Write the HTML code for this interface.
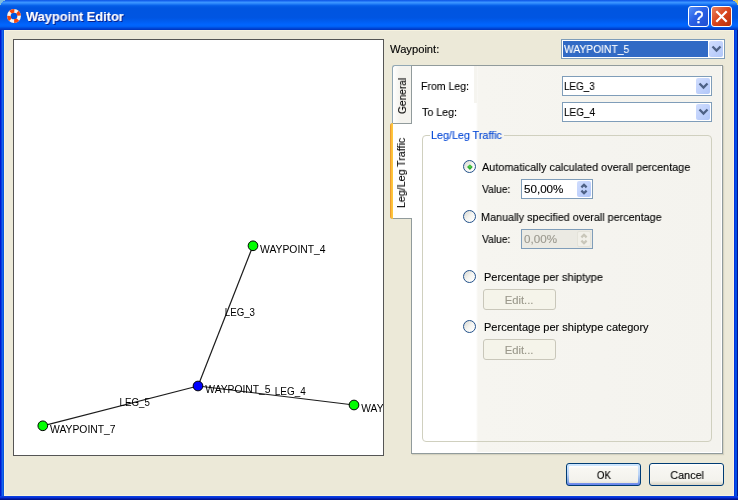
<!DOCTYPE html>
<html><head><meta charset="utf-8"><title>Waypoint Editor</title>
<style>
*{box-sizing:border-box;margin:0;padding:0}
html,body{width:738px;height:500px;overflow:hidden;background:#ECE9D8}
body{position:relative;font-family:"Liberation Sans",sans-serif;font-size:11px;color:#000;line-height:13px}
.a{position:absolute}
.t{position:absolute;white-space:pre;line-height:13px;height:13px;transform-origin:0 0;will-change:transform;-webkit-text-stroke:0.12px currentColor}
#title{left:0;top:0;width:738px;height:30px;background:linear-gradient(to bottom,#0A50DF 0px,#1F6FF5 1px,#3A94FF 2.5px,#2580F8 4px,#0D68EE 5px,#035CE6 6px,#0055E0 8px,#0055E2 18px,#0061F8 23px,#0066FF 25px,#0060F5 26.5px,#0052E5 27.5px,#0044D4 28.5px,#0033BB 30px)}
#bl{left:0;top:30px;width:4px;height:470px;background:linear-gradient(to right,#0019CF 0,#0019CF 1px,#0A40E0 1px,#0A40E0 2px,#1464EE 2px,#1464EE 3px,#0855DD 3px)}
#br{left:734px;top:30px;width:4px;height:470px;background:linear-gradient(to left,#00138C 0,#00138C 1px,#0048E0 1px,#0050E8 2px,#0050E8 3px,#0831D9 3px)}
#bb{left:0;top:496px;width:738px;height:4px;background:linear-gradient(to top,#00138C 0,#00138C 1px,#001EB0 1px,#001EB0 2px,#0831D9 2px,#0831D9 3px,#0A3FE0 3px)}
#canvas{left:13px;top:39px;width:371px;height:417px;background:#fff;border:1px solid #555;overflow:hidden}
.combo{position:absolute;border:1px solid #7F9DB9;background:#fff;height:20px}
.cbtn{position:absolute;right:1px;top:1px;width:14px;height:16px;border-radius:2px;background:linear-gradient(135deg,#D0DDFD,#C1D2FC 50%,#B0C6F8)}
.cbtn svg{position:absolute;left:0;top:0}
.radio{position:absolute;width:13px;height:13px;border-radius:50%;border:1px solid #21508A;background:linear-gradient(135deg,#DCDCD7 10%,#F4F4F0 50%,#fff 90%)}
.spin{position:absolute;width:72px;height:20px;border:1px solid #7F9DB9;background:#fff}
.dbtn{position:absolute;width:73px;height:21px;border:1px solid #C9C7BA;border-radius:3px;background:#F5F4EA}
.btn{position:absolute;height:23px;width:75px;border:1px solid #003C74;border-radius:3px;background:linear-gradient(to bottom,#fff 0,#F8F7F3 15%,#F3F2EC 80%,#E2DFD3 92%,#D8D3C6 100%)}
</style></head><body>
<div class="a" id="title"></div>
<div class="a" style="left:4px;top:30px;width:730px;height:466px;box-shadow:inset 0 0 0 1px #F6F2DF"></div>
<div class="a" id="bl"></div><div class="a" id="br"></div><div class="a" id="bb"></div>
<svg class="a" style="left:0;top:0" width="5" height="5" shape-rendering="crispEdges"><path d="M0 0h5v1h-2v1h-1v1h-1v2h-1z" fill="#7FBBDD"/></svg>
<svg class="a" style="left:733px;top:0" width="5" height="5" shape-rendering="crispEdges"><path d="M5 0h-5v1h2v1h1v1h1v2h1z" fill="#E0C860"/></svg>
<svg class="a" style="left:6px;top:8px" width="16" height="16" viewBox="0 0 16 16">
<circle cx="8" cy="8" r="5.15" fill="none" stroke="#F6F4F0" stroke-width="3.6"/>
<circle cx="8" cy="8" r="5.15" fill="none" stroke="#F5480F" stroke-width="3.6" stroke-dasharray="4.045 4.045" transform="rotate(-50 8 8)"/>
</svg>
<span class="t" style="left:26px;top:9px;font-size:13px;font-weight:bold;color:#fff;text-shadow:1px 1px 0 #0A1F8A;line-height:15px;height:15px;transform:scaleX(0.9860)">Waypoint Editor</span>
<div class="a" style="left:688px;top:6px;width:21px;height:21px;border:1px solid #fff;border-radius:3px;background:linear-gradient(135deg,#5590F8,#2A60E6 45%,#1E4ED0)"></div>
<span class="t" style="left:694px;top:8px;font-size:17px;color:#fff;line-height:19px;height:19px;-webkit-text-stroke:0.4px #fff">?</span>
<div class="a" style="left:711px;top:6px;width:21px;height:21px;border:1px solid #fff;border-radius:3px;background:linear-gradient(135deg,#E8835F,#D9431A 50%,#B8300C)"></div>
<svg class="a" style="left:711px;top:6px" width="21" height="21"><path d="M5.3 5.3L15.7 15.7M15.7 5.3L5.3 15.7" stroke="#fff" stroke-width="2.2"/></svg>

<div class="a" id="canvas">
<svg class="a" style="left:-1px;top:-1px;will-change:transform" width="371" height="417" viewBox="13 39 371 417">
<g stroke="#1c1c1c" stroke-width="1.2" fill="none">
<line x1="198" y1="386" x2="253" y2="245.8"/>
<line x1="198" y1="386" x2="354" y2="405"/>
<line x1="198" y1="386" x2="42.8" y2="425.8"/>
</g>
<g stroke="#000" stroke-width="1">
<circle cx="253" cy="245.8" r="4.85" fill="#00FF00"/>
<circle cx="354" cy="405" r="4.85" fill="#00FF00"/>
<circle cx="42.8" cy="425.8" r="4.85" fill="#00FF00"/>
<circle cx="198" cy="386" r="4.85" fill="#0000FF"/>
</g>
<g font-family="Liberation Sans, sans-serif" font-size="11" fill="#000">
<text x="260" y="253" textLength="65.6" lengthAdjust="spacingAndGlyphs">WAYPOINT_4</text>
<text x="224.8" y="316" textLength="30.2" lengthAdjust="spacingAndGlyphs">LEG_3</text>
<text x="205.3" y="393" textLength="65.2" lengthAdjust="spacingAndGlyphs">WAYPOINT_5</text>
<text x="274.8" y="395" textLength="31" lengthAdjust="spacingAndGlyphs">LEG_4</text>
<text x="119.6" y="406" textLength="30.2" lengthAdjust="spacingAndGlyphs">LEG_5</text>
<text x="361.3" y="412" textLength="65" lengthAdjust="spacingAndGlyphs">WAYPOINT_6</text>
<text x="50" y="433" textLength="65.6" lengthAdjust="spacingAndGlyphs">WAYPOINT_7</text>
</g>
</svg>
</div>

<div class="combo" style="left:561px;top:39px;width:164px">
  <div class="a" style="left:1px;top:1px;width:145px;height:16px;background:#316AC5"></div>
  <div class="cbtn"><svg width="14" height="16"><path d="M3.5 5.5L7.5 9.5L11.5 5.5" fill="none" stroke="#4D6185" stroke-width="2.3"/></svg></div>
</div>
<span class="t" style="left:564px;top:43px;transform:scaleX(0.9356);color:#fff">WAYPOINT_5</span>

<!-- tab pane -->
<div class="a" style="left:411px;top:65px;width:312px;height:389px;border:1px solid #919B9C;background:linear-gradient(to right,#fff 0,#fff 64px,#F6F5F0 66px,#F4F3EE 100%);box-shadow:inset -1px -1px 0 #fff,1px 1px 1px rgba(120,120,100,0.2)"></div>
<div class="a" style="left:474px;top:66px;width:3px;height:37px;background:#F5F4EF"></div>
<div class="a" style="left:392px;top:65px;width:20px;height:58px;border:1px solid #91A7B4;border-bottom:none;border-right-color:#919B9C;border-radius:3px 0 0 0;background:linear-gradient(to right,#fff,#F4F3EE 40%,#F4F3EE)"></div>
<div class="a" style="left:390px;top:123px;width:22px;height:96px;border:1px solid #919B9C;border-right:none;border-left:none;border-radius:3px 0 0 3px;background:#fff"></div>
<div class="a" style="left:390px;top:123px;width:3px;height:96px;border-radius:3px 0 0 3px;background:linear-gradient(to right,#E68B2C,#FFC73C 60%,#FFC73C)"></div>
<span class="t" style="left:396px;top:114px;transform:rotate(-90deg) scaleX(0.9249)">General</span>
<span class="t" style="left:395px;top:208.2px;transform:rotate(-90deg) scaleX(0.9672)">Leg/Leg Traffic</span>

<div class="combo" style="left:562px;top:76px;width:150px"><div class="cbtn"><svg width="14" height="16"><path d="M3.5 5.5L7.5 9.5L11.5 5.5" fill="none" stroke="#4D6185" stroke-width="2.3"/></svg></div></div>
<div class="combo" style="left:562px;top:102px;width:150px"><div class="cbtn"><svg width="14" height="16"><path d="M3.5 5.5L7.5 9.5L11.5 5.5" fill="none" stroke="#4D6185" stroke-width="2.3"/></svg></div></div>
<span class="t" style="left:564.3px;top:80px;transform:scaleX(0.8934);">LEG_3</span>
<span class="t" style="left:564.3px;top:106px;transform:scaleX(0.9051);">LEG_4</span>

<div class="a" style="left:422px;top:135px;width:290px;height:307px;border:1px solid #D0D0BF;border-radius:4px"></div>
<div class="a" style="left:430px;top:134px;width:74px;height:3px;background:linear-gradient(to right,#fff 0,#fff 46px,#F5F4EF 47px,#F5F4EF 100%)"></div>
<span class="t" style="left:431px;top:129px;transform:scaleX(0.9769);color:#0046D5">Leg/Leg Traffic</span>

<div class="radio" style="left:463px;top:160px"><div class="a" style="left:3.6px;top:3.6px;width:3.8px;height:3.8px;transform:rotate(45deg);border-radius:0.6px;background:radial-gradient(circle at 40% 40%,#55D555,#21A121 75%)"></div></div>
<div class="radio" style="left:463px;top:210px"></div>
<div class="radio" style="left:463px;top:270px"></div>
<div class="radio" style="left:463px;top:320px"></div>
<div class="spin" style="left:521px;top:179px">
 <div class="a" style="left:55px;top:1px;width:14px;height:16px;border-radius:2px;background:linear-gradient(135deg,#D0DDFD,#C1D2FC 50%,#B0C6F8)"><svg class="a" style="left:0;top:0" width="14" height="16"><path d="M4.4 6.4L7 3.8L9.6 6.4M4.4 9.6L7 12.2L9.6 9.6" fill="none" stroke="#4D6185" stroke-width="2.3"/></svg></div></div>
<div class="spin" style="left:521px;top:229px;background:#EBEAE3">
 <div class="a" style="left:55px;top:1px;width:14px;height:16px;border-radius:2px;background:#F1F0E9;border:1px solid #E4E3DA"><svg class="a" style="left:-1px;top:-1px" width="14" height="16"><path d="M4.4 6.4L7 3.8L9.6 6.4M4.4 9.6L7 12.2L9.6 9.6" fill="none" stroke="#C9C7BA" stroke-width="2.3"/></svg></div></div>
<span class="t" style="left:523.8px;top:183px;transform:scaleX(1.0559);">50,00%</span>
<span class="t" style="left:523.8px;top:233px;transform:scaleX(1.0576);color:#9A988E">0,00%</span>
<div class="dbtn" style="left:483px;top:289px"></div>
<div class="dbtn" style="left:483px;top:339px"></div>
<span class="t" style="left:504.94px;top:294px;transform-origin:50% 0;transform:scaleX(1.0240);color:#9A988B">Edit...</span>
<span class="t" style="left:504.94px;top:344px;transform-origin:50% 0;transform:scaleX(1.0240);color:#9A988B">Edit...</span>
<span class="t" style="left:389.8px;top:43px;transform:scaleX(1.0162);">Waypoint:</span>
<span class="t" style="left:421.2px;top:80px;transform:scaleX(0.9573);">From Leg:</span>
<span class="t" style="left:421.5px;top:106px;transform:scaleX(0.9697);">To Leg:</span>
<span class="t" style="left:481.8px;top:161px;transform:scaleX(0.9841);">Automatically calculated overall percentage</span>
<span class="t" style="left:481.8px;top:183px;transform:scaleX(0.9350);">Value:</span>
<span class="t" style="left:481.2px;top:211px;transform:scaleX(0.9812);">Manually specified overall percentage</span>
<span class="t" style="left:481.8px;top:233px;transform:scaleX(0.9350);">Value:</span>
<span class="t" style="left:484.2px;top:271px;transform:scaleX(0.9962);">Percentage per shiptype</span>
<span class="t" style="left:484.2px;top:321px;transform:scaleX(1.0006);">Percentage per shiptype category</span>

<div class="btn" style="left:566px;top:463px;background:linear-gradient(to bottom,#CEE7FF,#BCD4F6 50%,#89ADE4 80%,#6982EE)"><div class="a" style="left:2px;top:2px;width:69px;height:17px;border-radius:1px;background:linear-gradient(to bottom,#fff 0,#F8F7F3 15%,#F3F2EC 85%,#E8E5DA 100%)"></div></div>
<div class="btn" style="left:649px;top:463px"></div>
<span class="t" style="left:595.65px;top:469px;transform-origin:50% 0;transform:scaleX(0.8927);">OK</span>
<span class="t" style="left:669.67px;top:469px;transform-origin:50% 0;transform:scaleX(0.9810);">Cancel</span>
</body></html>
